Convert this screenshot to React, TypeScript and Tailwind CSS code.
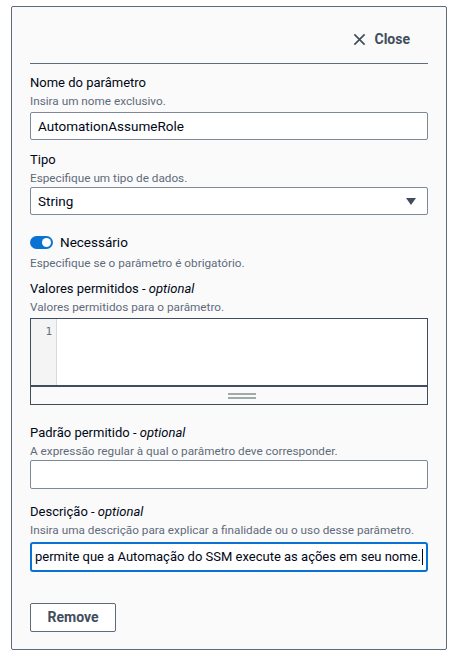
import React from "react";

const font = { fontFamily: "Roboto, 'Noto Sans', sans-serif" };

const Label = ({ text, optional }: { text: string; optional?: boolean }) => (
  <div className="text-[13px] leading-5 text-[#000716]">
    {text}
    {optional && (
      <>
        {" - "}
        <i>optional</i>
      </>
    )}
  </div>
);

const Hint = ({ text }: { text: string }) => (
  <div className="text-[11.75px] leading-4 text-[#5f6b7a]">{text}</div>
);

const App = () => {
  return (
    <div className="min-h-[657px] bg-white" style={font}>
      <div className="ml-[11px] mt-[6px] w-[436px] h-[644px] rounded-[2px] border border-[#5f6b7a] bg-[#fafafa] px-[18px]">
        {/* header */}
        <div className="flex justify-end pt-[22px] pr-[18px]">
          <button className="flex items-center gap-2 text-[14px] leading-5 font-bold text-[#414d5c]">
            <svg width="13" height="13" viewBox="0 0 14 14" fill="none">
              <path d="M1.5 1.5l11 11M12.5 1.5l-11 11" stroke="#414d5c" strokeWidth="1.8" />
            </svg>
            Close
          </button>
        </div>
        <div className="mt-[14px] border-t border-[#5f6b7a]" />

        {/* Nome */}
        <div className="mt-[9px]">
          <Label text="Nome do parâmetro" />
          <Hint text="Insira um nome exclusivo." />
          <div className="mt-[3px] h-[28px] rounded-[2px] border border-[#7d8998] bg-white px-[7px] flex items-center text-[13.5px] text-[#000716]">
            AutomationAssumeRole
          </div>
        </div>

        {/* Tipo */}
        <div className="mt-[10px]">
          <Label text="Tipo" />
          <Hint text="Especifique um tipo de dados." />
          <div className="mt-[1px] h-[28px] rounded-[2px] border border-[#7d8998] bg-white pl-[7px] pr-[11px] flex items-center justify-between text-[13.5px] text-[#000716]">
            <span>String</span>
            <svg width="10" height="7" viewBox="0 0 10 7">
              <path d="M0 0h10L5 7z" fill="#414d5c" />
            </svg>
          </div>
        </div>

        {/* Toggle */}
        <div className="mt-[17px] flex items-center gap-[7px]">
          <div className="relative w-[23px] h-[13px] rounded-full bg-[#0972d3]">
            <div className="absolute right-[2px] top-[2px] w-[9px] h-[9px] rounded-full bg-white" />
          </div>
          <span className="text-[13.5px] leading-5 text-[#000716]">Necessário</span>
        </div>
        <div className="mt-[3px]">
          <Hint text="Especifique se o parâmetro é obrigatório." />
        </div>

        {/* Valores permitidos */}
        <div className="mt-[8px]">
          <Label text="Valores permitidos" optional />
          <Hint text="Valores permitidos para o parâmetro." />
          <div className="mt-[3px] border border-[#414d5c] bg-white">
            <div className="flex h-[66px]">
              <div className="w-[26px] bg-[#f4f4f4] border-r border-[#d5dbdb] pt-[5px] pr-[4px] text-right text-[11px] leading-4 text-[#687078]" style={{ fontFamily: "'DejaVu Sans Mono', monospace" }}>
                1
              </div>
              <div className="flex-1" />
            </div>
            <div className="h-[19px] border-t-2 border-[#414d5c] bg-[#fafafa] pl-[26px] flex flex-col items-center justify-center gap-[2px]">
              <div className="w-[28px] h-[2px] bg-[#a0aaab]" />
              <div className="w-[28px] h-[2px] bg-[#a0aaab]" />
            </div>
          </div>
        </div>

        {/* Padrão */}
        <div className="mt-[18px]">
          <Label text="Padrão permitido" optional />
          <Hint text="A expressão regular à qual o parâmetro deve corresponder." />
          <div className="mt-[1px] h-[29px] rounded-[2px] border border-[#7d8998] bg-white" />
        </div>

        {/* Descrição */}
        <div className="mt-[13px]">
          <Label text="Descrição" optional />
          <Hint text="Insira uma descrição para explicar a finalidade ou o uso desse parâmetro." />
          <div className="mt-[4px] h-[30px] rounded-[3px] border-2 border-[#0972d3] bg-white pr-[3px] flex items-center justify-end overflow-hidden whitespace-nowrap text-[13px] text-[#000716]">
            <span>A função do IAM que permite que a Automação do SSM execute as ações em seu nome.</span>
            <span className="ml-[1px] w-px h-[16px] bg-[#000716] shrink-0" />
          </div>
        </div>

        {/* Remove */}
        <button className="mt-[31px] w-[86px] h-[29px] rounded-[2px] border border-[#5f6b7a] bg-white text-[14px] font-bold text-[#414d5c]">
          Remove
        </button>
      </div>
    </div>
  );
};

export default App;
